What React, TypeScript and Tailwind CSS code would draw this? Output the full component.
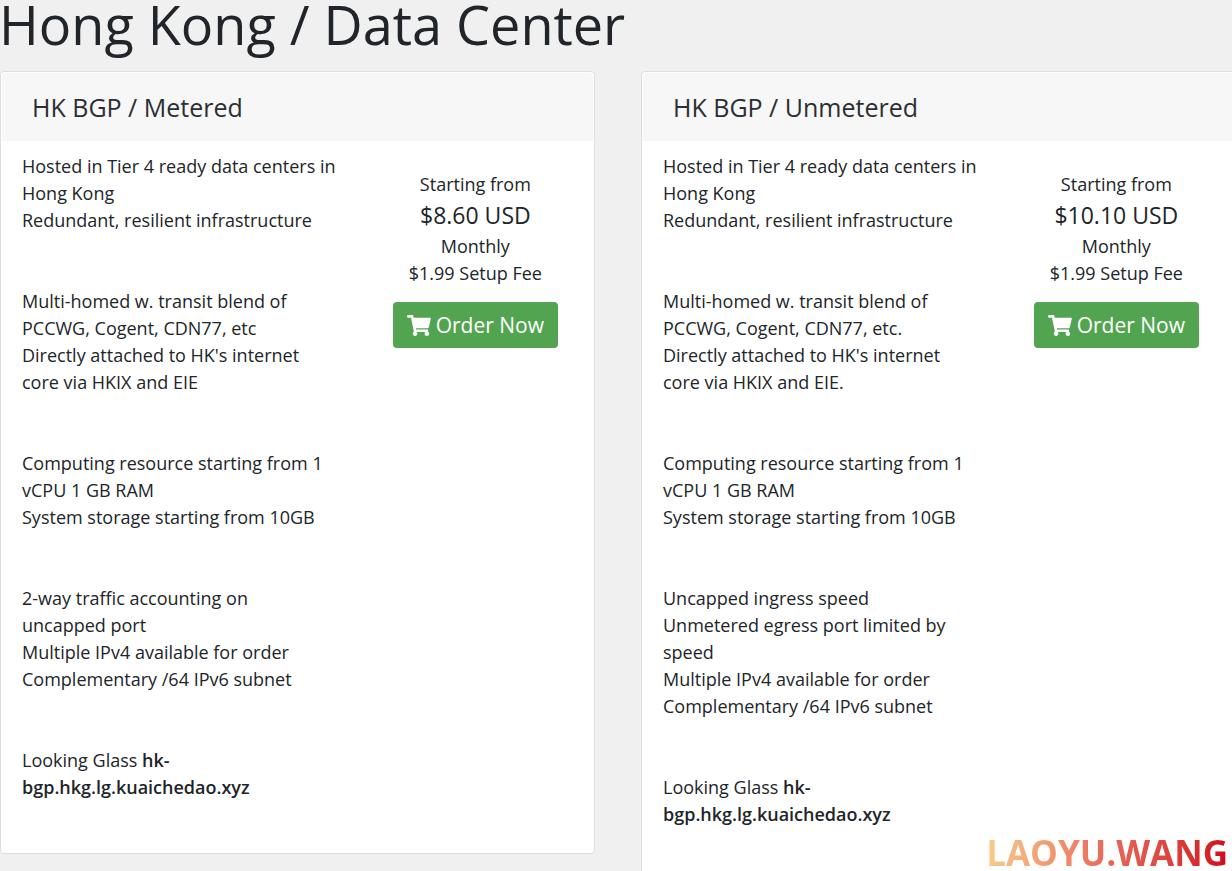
import React from "react";
import { FaShoppingCart } from "react-icons/fa";

type Product = {
  name: string;
  price: string;
  features: string[][];
  lookingGlass: string;
};

const products: Product[] = [
  {
    name: "HK BGP / Metered",
    price: "$8.60 USD",
    features: [
      [
        "Hosted in Tier 4 ready data centers in Hong Kong",
        "Redundant, resilient infrastructure",
      ],
      [
        "Multi-homed w. transit blend of PCCWG, Cogent, CDN77, etc",
        "Directly attached to HK's internet core via HKIX and EIE",
      ],
      [
        "Computing resource starting from 1 vCPU 1 GB RAM",
        "System storage starting from 10GB",
      ],
      [
        "2-way traffic accounting on uncapped port",
        "Multiple IPv4 available for order",
        "Complementary /64 IPv6 subnet",
      ],
    ],
    lookingGlass: "hk-bgp.hkg.lg.kuaichedao.xyz",
  },
  {
    name: "HK BGP / Unmetered",
    price: "$10.10 USD",
    features: [
      [
        "Hosted in Tier 4 ready data centers in Hong Kong",
        "Redundant, resilient infrastructure",
      ],
      [
        "Multi-homed w. transit blend of PCCWG, Cogent, CDN77, etc.",
        "Directly attached to HK's internet core via HKIX and EIE.",
      ],
      [
        "Computing resource starting from 1 vCPU 1 GB RAM",
        "System storage starting from 10GB",
      ],
      [
        "Uncapped ingress speed",
        "Unmetered egress port limited by speed",
        "Multiple IPv4 available for order",
        "Complementary /64 IPv6 subnet",
      ],
    ],
    lookingGlass: "hk-bgp.hkg.lg.kuaichedao.xyz",
  },
];

const ProductCard = ({ product }: { product: Product }) => {
  return (
    <article className="rounded border border-[#dedede] bg-white p-px pb-[52px]">
      <header className="rounded-t bg-[#f7f7f7] px-[30px] py-4">
        <h2 className="text-[25px] leading-9 text-[#2b2f33]">{product.name}</h2>
      </header>
      <div className="flex items-start justify-between pt-3 pr-[35px] pl-5">
        <div className="flex w-[314px] flex-col gap-[54px]">
          {product.features.map((group) => (
            <div key={group[0]}>
              {group.map((line) => (
                <p key={line}>{line}</p>
              ))}
            </div>
          ))}
          <p>
            Looking Glass{" "}
            <strong className="font-semibold">{product.lookingGlass}</strong>
          </p>
        </div>
        <div className="flex flex-col items-center pt-[18px]">
          <span>Starting from</span>
          <span className="text-[23px] leading-[35px]">{product.price}</span>
          <span>Monthly</span>
          <span>$1.99 Setup Fee</span>
          <button
            type="button"
            className="mt-[15px] flex h-[46px] items-center gap-[5px] rounded bg-[#53a451] px-3.5 text-[21px] text-white"
          >
            <FaShoppingCart className="h-[21px] w-6" />
            Order Now
          </button>
        </div>
      </div>
    </article>
  );
};

export default function App() {
  return (
    <div className="relative h-screen overflow-hidden bg-[#f0f0f0] font-['Open_Sans',sans-serif] text-lg leading-[27px] text-[#212529]">
      <h1 className="-ml-px text-[54px] leading-[48px]">
        Hong Kong / Data Center
      </h1>
      <main className="-mr-1 mt-[23px] grid grid-cols-2 items-start gap-[46px]">
        {products.map((product) => (
          <ProductCard key={product.name} product={product} />
        ))}
      </main>
      <div className="absolute right-1 bottom-0 bg-gradient-to-r from-[#f8cc8c] via-[#e8685a] to-[#d0021b] bg-clip-text text-[35px] leading-9 font-bold text-transparent">
        LAOYU.WANG
      </div>
    </div>
  );
}
